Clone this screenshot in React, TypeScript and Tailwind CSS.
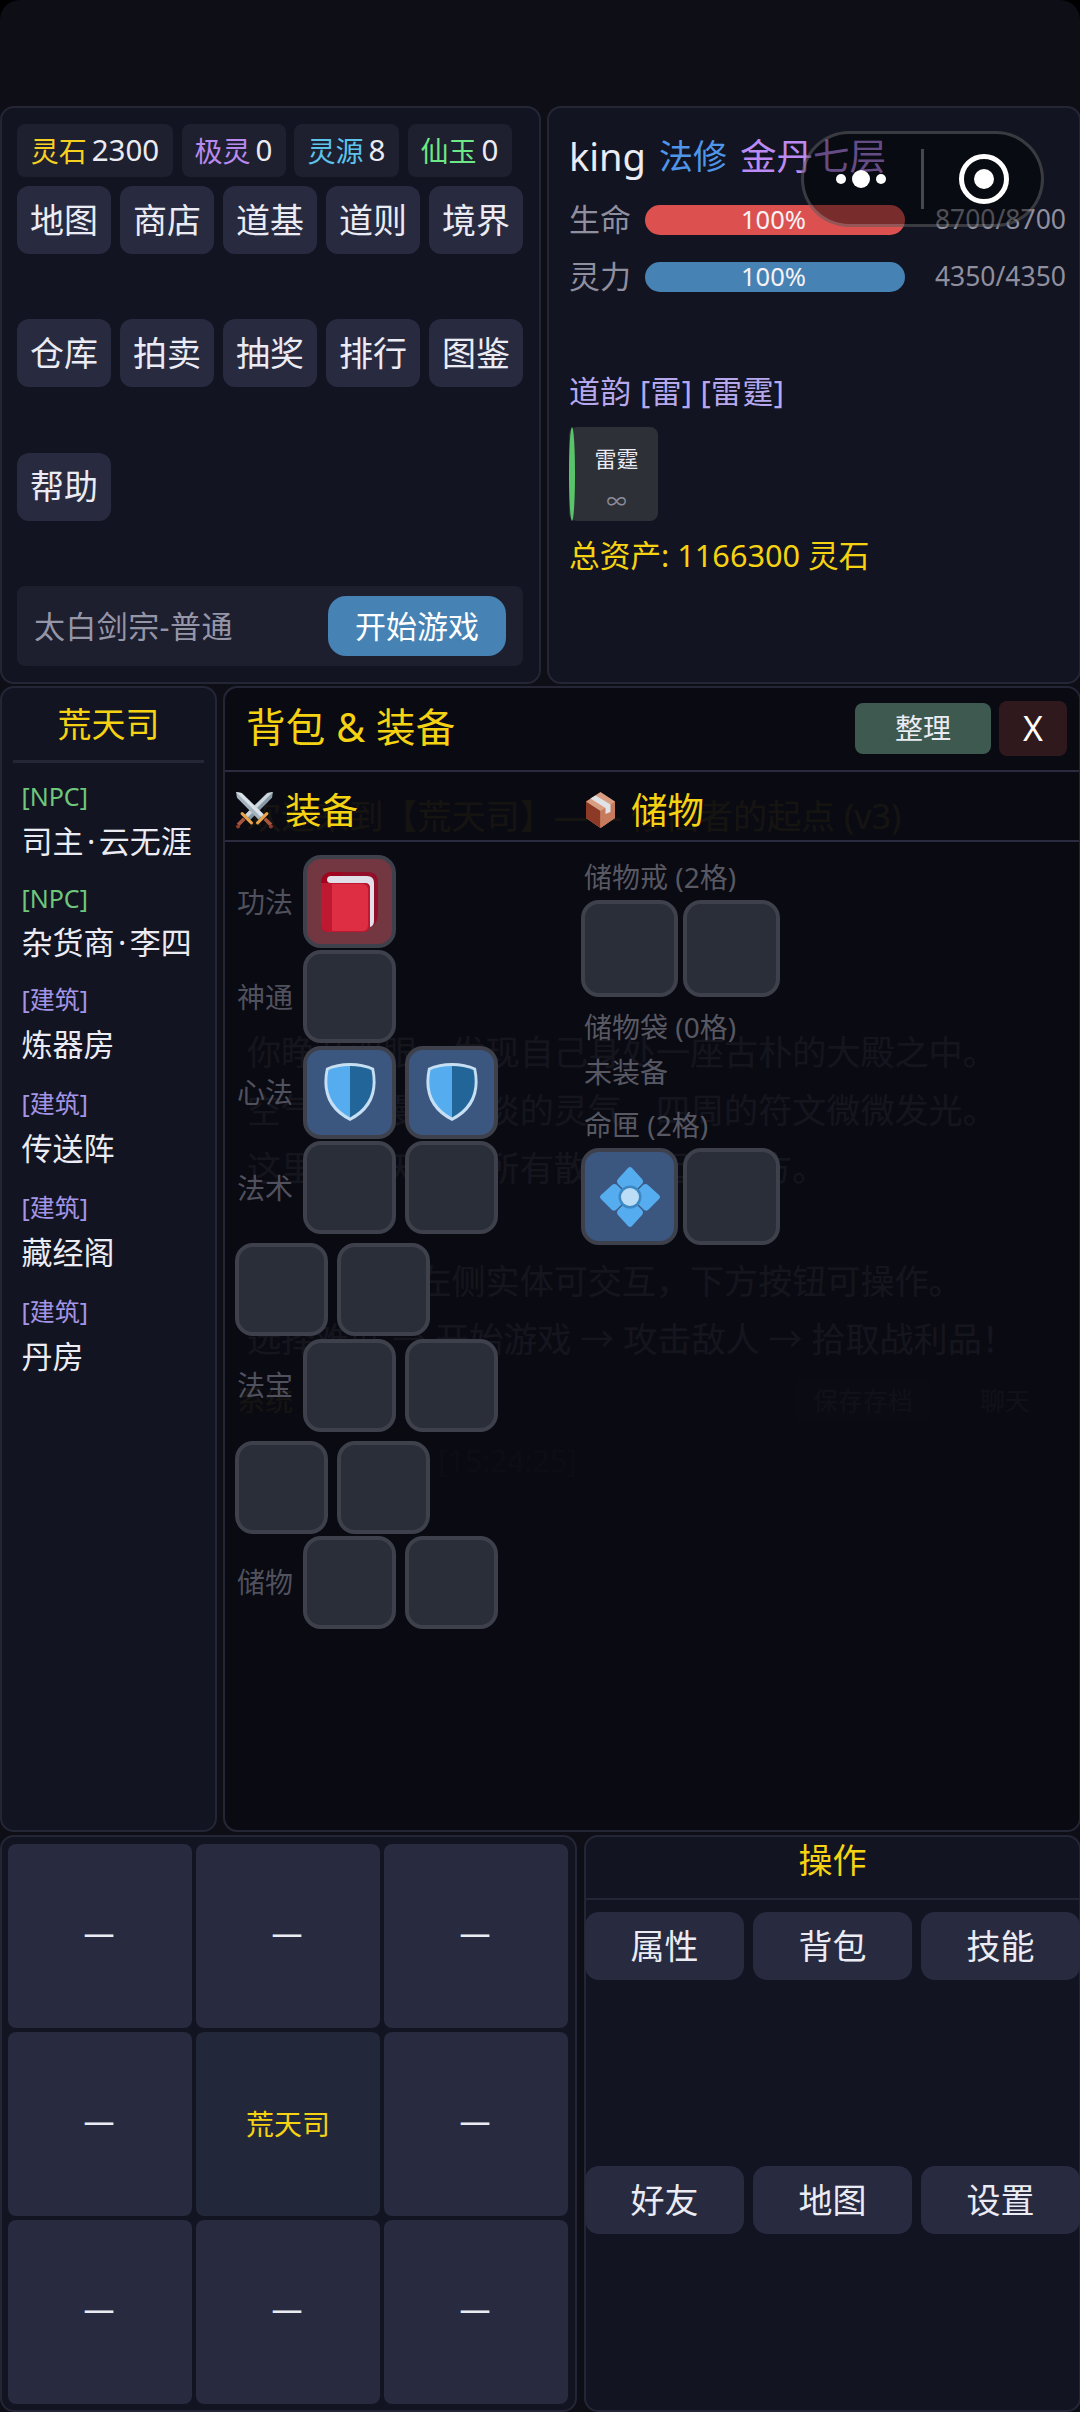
import React from "react";
import clsx from "clsx";

type IconName = "book" | "shield" | "gem";

interface SlotItem {
  icon?: IconName;
  tone?: "red" | "blue";
}

const currencies = [
  { label: "灵石", value: "2300", color: "text-[#f5d020]", width: "w-[156px]" },
  { label: "极灵", value: "0", color: "text-[#b88af0]", width: "w-[104px]" },
  { label: "灵源", value: "8", color: "text-[#5cc3ea]", width: "w-[105px]" },
  { label: "仙玉", value: "0", color: "text-[#6ee787]", width: "w-[104px]" },
];

const menuItems = [
  "地图", "商店", "道基", "道则", "境界",
  "仓库", "拍卖", "抽奖", "排行", "图鉴",
  "帮助",
];

const entities = [
  { kind: "NPC", name: "司主·云无涯" },
  { kind: "NPC", name: "杂货商·李四" },
  { kind: "建筑", name: "炼器房" },
  { kind: "建筑", name: "传送阵" },
  { kind: "建筑", name: "藏经阁" },
  { kind: "建筑", name: "丹房" },
];

const blueShield: SlotItem = { icon: "shield", tone: "blue" };

const equipment: { label: string; slots: SlotItem[] }[] = [
  { label: "功法", slots: [{ icon: "book", tone: "red" }] },
  { label: "神通", slots: [{}] },
  { label: "心法", slots: [blueShield, blueShield] },
  { label: "法术", slots: [{}, {}, {}, {}] },
  { label: "法宝", slots: [{}, {}, {}, {}] },
  { label: "储物", slots: [{}, {}] },
];

const actions = ["属性", "背包", "技能", "好友", "地图", "设置"];

const BookIcon = () => (
  <svg viewBox="0 0 57 60" className="h-[60px] w-[57px]">
    <path d="M9 0H47Q57 0 57 10V42Q57 50 51 55L48 20L4 14V8Q4 0 9 0Z" fill="#910f28" />
    <path d="M0 11Q0 2 9 0H20V60H7Q0 60 0 53Z" fill="#a0041e" />
    <path d="M10 4H46Q53 4 53 11V49Q53 54 49 55V16Q49 11 44 11H10Q6 11 6 8Q6 4 10 4Z" fill="#e1dfe8" />
    <path d="M0 11H42Q49 11 49 18V53Q49 60 42 60H7Q0 60 0 53Z" fill="#be1931" />
    <path d="M11 12H41Q47 12 47 18V53Q47 59 41 59H11Z" fill="#dd2e44" />
  </svg>
);

const ShieldIcon = () => (
  <svg viewBox="0 0 52 58" className="h-[58px] w-[52px]">
    <path d="M26 0Q39 0 50 5Q58 42 26 58Q-6 42 2 5Q13 0 26 0Z" fill="#c6dff3" />
    <path d="M26 3Q38 3 47.500 7Q54 39 26 54.500Z" fill="#226699" />
    <path d="M26 3Q14 3 4.500 7Q-2 39 26 54.500Z" fill="#55acee" />
  </svg>
);

const GemIcon = () => (
  <svg viewBox="0 0 60 60" className="h-[60px] w-[60px]">
    <g fill="#55acee">
      <path d="M28 1Q30 -1 32 1L42 12Q44 14.500 42 17L32 27H28L18 17Q16 14.500 18 12Z" />
      <path d="M28 59Q30 61 32 59L42 48Q44 45.500 42 43L32 33H28L18 43Q16 45.500 18 48Z" />
      <path d="M1 28Q-1 30 1 32L12 43Q14.500 45 17 42L27 32V28L17 18Q14.500 16 12 18Z" />
      <path d="M59 28Q61 30 59 32L48 43Q45.500 45 43 42L33 32V28L43 18Q45.500 16 48 18Z" />
    </g>
    <circle cx="30" cy="30" r="11.500" fill="#3b88c3" />
    <circle cx="30" cy="30" r="9" fill="#bbddf5" />
  </svg>
);

const SwordsIcon = () => (
  <svg viewBox="0 0 36 36" className="h-[37px] w-[37px]">
    <path d="M36 0L30.500 1L9 22L14 27L35 5.500Z" fill="#8899a6" />
    <path d="M36 0L30.500 1L9 22L11.500 24.500Z" fill="#ccd6dd" />
    <path d="M0 0L5.500 1L27 22L22 27L1 5.500Z" fill="#a4b3be" />
    <path d="M0 0L5.500 1L27 22L24.500 24.500Z" fill="#d9e2e8" />
    <path d="M8 26L2 32M28 26L34 32" stroke="#a6543c" strokeWidth="3.500" />
    <path d="M6 21L15 30M30 21L21 30" stroke="#e8a44a" strokeWidth="3" strokeLinecap="round" />
    <circle cx="2" cy="33.500" r="2" fill="#8a3b2c" />
    <circle cx="34" cy="33.500" r="2" fill="#8a3b2c" />
  </svg>
);

const BoxIcon = () => (
  <svg viewBox="0 0 29 36" className="h-[36px] w-[29px]">
    <path d="M14.500 0L29 9.500V26L14.500 36L0 26V9.500Z" fill="#d99e82" />
    <path d="M0 9.500L14.500 19V36L0 26Z" fill="#8c3a26" />
    <path d="M14.500 19L29 9.500V26L14.500 36Z" fill="#c77a5c" />
    <path d="M4.500 6.500L9.500 3.500L24.500 12.500V20L19.500 22V16Z" fill="#dfe3e8" />
  </svg>
);

const icons: Record<IconName, React.FC> = {
  book: BookIcon,
  shield: ShieldIcon,
  gem: GemIcon,
};

const Slot: React.FC<{ item: SlotItem; large?: boolean }> = ({ item, large }) => {
  const Icon = item.icon ? icons[item.icon] : null;
  return (
    <div
      className={clsx(
        "flex shrink-0 items-center justify-center rounded-[18px] border-4 border-[#3e414b]",
        large ? "size-[97px]" : "size-[93px]",
        item.tone === "red" && "bg-[#733742]",
        item.tone === "blue" && "bg-[#3b567f]",
        !item.tone && "bg-[#2a2e38]",
      )}
    >
      {Icon && <Icon />}
    </div>
  );
};

const Panel: React.FC<{ className?: string; children: React.ReactNode }> = ({
  className,
  children,
}) => (
  <section className={clsx("shrink-0 rounded-[14px] border-2 border-[#242636] bg-[#121421]", className)}>
    {children}
  </section>
);

const StatBar: React.FC<{ label: string; value: string; color: string }> = ({
  label,
  value,
  color,
}) => (
  <div className="flex h-[57px] items-center">
    <span className="w-[76px] text-[31px] text-[#8f8f9f]">{label}</span>
    <div
      className={clsx(
        "flex h-[30px] w-[260px] items-center justify-center rounded-full pr-[3px] text-[25.5px] text-[#f6f2f4]",
        color,
      )}
    >
      100%
    </div>
    <span className="w-[161px] pt-[1px] text-right text-[26.5px] text-[#8f8f9f]">{value}</span>
  </div>
);

// Native mini-program capsule floating over the header
const Capsule = () => (
  <div className="absolute left-[801px] top-[131px] h-[96px] w-[243px] rounded-full border-[3px] border-white/20 bg-black/45">
    <svg viewBox="0 0 237 90" className="h-[90px] w-[237px]">
      <circle cx="37" cy="45" r="5" fill="#fff" />
      <circle cx="57" cy="45" r="9" fill="#fff" />
      <circle cx="77" cy="45" r="5" fill="#fff" />
      <path d="M118.500 15V75" stroke="#fff" strokeOpacity="0.25" strokeWidth="3" />
      <circle cx="180" cy="45" r="22.500" fill="none" stroke="#fff" strokeWidth="5" />
      <circle cx="180" cy="45" r="10" fill="#fff" />
    </svg>
  </div>
);

const MenuPanel = () => (
  <Panel className="h-[578px] w-[541px] pl-[15px] pr-[16px] pt-[16px]">
    <div className="flex gap-[8.5px]">
      {currencies.map((c) => (
        <div
          key={c.label}
          className={clsx("flex h-[53px] items-center justify-center gap-[5px] rounded-lg bg-[#1e1f2f] text-[28px]", c.width)}
        >
          <span className={c.color}>{c.label}</span>
          <span className="text-[29.5px]">{c.value}</span>
        </div>
      ))}
    </div>
    <div className="mt-[9px] grid h-[400px] grid-cols-5 grid-rows-3 gap-x-[9px]">
      {menuItems.map((item) => (
        <button key={item} className="h-[68px] rounded-xl bg-[#282a40] text-[34px]">
          {item}
        </button>
      ))}
    </div>
    <div className="flex h-[80px] items-center justify-between rounded-lg bg-[#1d1e2e] pl-[17px] pr-[17px]">
      <span className="text-[31px] tracking-[0.4px] text-[#9595a8]">太白剑宗-普通</span>
      <button className="h-[60px] w-[178px] rounded-[18px] bg-[#4682b4] text-[31px] text-white">
        开始游戏
      </button>
    </div>
  </Panel>
);

const StatusPanel = () => (
  <Panel className="h-[578px] w-[534px] pl-[20px]">
    <div className="mt-[20px] flex h-[63px] items-center whitespace-pre">
      <span className="w-[90px] pb-[6px] text-[38px]">king</span>
      <span className="w-[81px] pb-[6px] text-[34px] text-[#4f96ea]">法修</span>
      <span className="pb-[6px] text-[36.5px] text-[#bb8af2]">金丹七层</span>
    </div>
    <StatBar label="生命" value="8700/8700" color="bg-[#dc5150]" />
    <StatBar label="灵力" value="4350/4350" color="bg-[#4682b4]" />
    <div className="mt-[63px] flex h-[46px] items-center text-[31px] tracking-[0.3px] text-[#b7a8ee]">
      道韵 [雷] [雷霆]
    </div>
    <div className="mt-[13px] flex h-[94px] w-[89px] rounded-lg bg-[#2e3038]">
      <div className="h-full w-[6px] rounded-[50%] bg-[#5ac46b]" />
      <div className="flex flex-1 flex-col items-center pt-[15px]">
        <span className="text-[22px] leading-[32px]">雷霆</span>
        <span className="mt-[14px] text-[20px] leading-[28px] text-[#8c8c99]">∞</span>
      </div>
    </div>
    <div className="mt-[11px] flex h-[46px] items-center text-[30.7px] text-[#f5d312]">
      总资产: 1166300 灵石
    </div>
  </Panel>
);

const EntityName: React.FC<{ name: string }> = ({ name }) => {
  const [title, person] = name.split("·");
  return (
    <div className="flex h-[46px] items-center text-[31px]">
      {title}
      {person && (
        <>
          <span className="mx-[3.5px]">·</span>
          {person}
        </>
      )}
    </div>
  );
};

const EntityPanel = () => (
  <Panel className="h-[1146px] w-[217px] px-[11px]">
    <h2 className="flex h-[75px] items-center justify-center border-b-[3px] border-[#242636] text-[34px] text-[#f5d312]">
      荒天司
    </h2>
    <ul className="mt-[13px] pl-[8.5px]">
      {entities.map(({ kind, name }) => (
        <li key={name} className={clsx("whitespace-nowrap", kind === "NPC" ? "h-[101.5px]" : "h-[104px]")}>
          <div
            className={clsx(
              "flex h-[42px] items-center text-[25px]",
              kind === "NPC" ? "text-[#6fc77c]" : "text-[#a394e6]",
            )}
          >
            [{kind}]
          </div>
          <EntityName name={name} />
        </li>
      ))}
    </ul>
  </Panel>
);

const StoryLog = () => (
  <div className="whitespace-pre pt-[99px] text-[34.1px] leading-[58px]">
    <div className="pl-[22px]">
      <p className="text-[#ffd700]">欢迎来到【荒天司】—— 修仙者的起点 (v3)</p>
      <p className="mt-[178px]">你睁开双眼，发现自己身处一座古朴的大殿之中。</p>
      <p>空气中弥漫着淡淡的灵气，四周的符文微微发光。</p>
      <p>这里是荒天司，所有散修的起始地方。</p>
      <p className="mt-[55px]">提示：点击左侧实体可交互，下方按钮可操作。</p>
      <p>选择难度 → 开始游戏 → 攻击敌人 → 拾取战利品！</p>
    </div>
    <div className="flex h-[64px] items-center bg-[#1e1f2f] pl-[12px] text-[25px]">
      <span className="w-[558px] shrink-0 text-[28px] text-[#ffd700]">系统</span>
      <span className="flex h-[42px] w-[136px] shrink-0 items-center justify-center rounded-lg bg-[#2e3048] text-[#9595a8]">
        保存存档
      </span>
      <span className="flex-1 text-center text-[#9595a8]">聊天</span>
    </div>
    <p className="pl-[213px] text-[30px] text-[#4f505e]">[15:24:25]</p>
  </div>
);

const storageLabel = "flex items-center pb-[2px] pl-[3px] text-[28px] text-[#585863]";

const BagOverlay = () => (
  <div className="absolute inset-0 flex flex-col rounded-l-[14px] bg-[#090912]/95">
    <header className="flex h-[84px] shrink-0 items-center border-b-2 border-[#2a2b3e] pb-[2px] pl-[21px]">
      <h1 className="flex-1 text-[39.5px] tracking-[0.3px] text-[#f5d312]">背包 & 装备</h1>
      <button className="h-[51px] w-[136px] rounded-lg bg-[#3e5a50] text-[28px]">整理</button>
      <button className="ml-[8px] mr-[12px] h-[55px] w-[68px] rounded-lg bg-[#30191d] text-[34px] text-white">
        X
      </button>
    </header>
    <div className="flex h-[70px] shrink-0 items-center border-b-2 border-[#2a2b3e] pt-[8px] text-[36.5px] text-[#f5d312]">
      <h2 className="flex w-[350px] items-center gap-[12px] pl-[11px]">
        <SwordsIcon />
        装备
      </h2>
      <h2 className="flex items-center gap-[16px] pl-[11px]">
        <BoxIcon />
        储物
      </h2>
    </div>
    <div className="flex pl-[10px] pt-[13px]">
      <div className="w-[346px]">
        {equipment.map(({ label, slots }) => (
          <div key={label} className="mb-[2.4px] flex w-[280px] flex-wrap gap-y-[9px]">
            <div className="flex w-[68px] items-center pl-[2px] text-[28px] text-[#51515e]">{label}</div>
            {slots.map((item, i) => (
              <div key={i} className="mr-[9px]">
                <Slot item={item} />
              </div>
            ))}
          </div>
        ))}
      </div>
      <div>
        <div className={clsx(storageLabel, "h-[45px]")}>储物戒 (2格)</div>
        <div className="flex gap-[5px]">
          <Slot item={{}} large />
          <Slot item={{}} large />
        </div>
        <div className={clsx(storageLabel, "mt-[8px] h-[45px]")}>储物袋 (0格)</div>
        <div className={clsx(storageLabel, "h-[45px]")}>未装备</div>
        <div className={clsx(storageLabel, "mt-[8px] h-[45px]")}>命匣 (2格)</div>
        <div className="flex gap-[5px]">
          <Slot item={{ icon: "gem", tone: "blue" }} large />
          <Slot item={{}} large />
        </div>
      </div>
    </div>
  </div>
);

const MapPanel = () => (
  <Panel className="grid h-[577px] w-[577px] grid-cols-3 grid-rows-3 gap-1 p-[6px] pr-[7px] pt-[7px]">
    {Array.from({ length: 9 }, (_, i) => (
      <button
        key={i}
        className={clsx(
          "rounded-lg",
          i === 4 ? "bg-[#23273a] text-[28px] text-[#f5d312]" : "bg-[#282a40] pb-[7px] pr-[2px] text-[31px]",
        )}
      >
        {i === 4 ? "荒天司" : "—"}
      </button>
    ))}
  </Panel>
);

const ActionPanel = () => (
  <Panel className="h-[577px] w-[497px]">
    <h2 className="flex h-[63px] items-center justify-center border-b-2 border-[#242636] pb-[14px] text-[34px] text-[#f5d312]">
      操作
    </h2>
    <div className="-mx-[1px] mt-[12px] grid h-[508px] grid-cols-3 grid-rows-2 gap-x-[9px]">
      {actions.map((action) => (
        <button key={action} className="h-[68px] rounded-[14px] bg-[#282a40] text-[34px]">
          {action}
        </button>
      ))}
    </div>
  </Panel>
);

export default function App() {
  return (
    <div className="bg-black">
      <main className="relative flex h-[2412px] w-[1080px] flex-col overflow-hidden rounded-t-[20px] bg-[#0d0e16] pt-[106px] font-['Noto_Sans','Noto_Sans_CJK_SC',sans-serif] text-[#ebebf3]">
        <div className="flex gap-[6px]">
          <MenuPanel />
          <StatusPanel />
        </div>
        <div className="mt-[2px] flex gap-[6px]">
          <EntityPanel />
          <Panel className="relative h-[1146px] w-[858px] overflow-hidden">
            <StoryLog />
            <BagOverlay />
          </Panel>
        </div>
        <div className="mt-[3px] flex gap-[7px]">
          <MapPanel />
          <ActionPanel />
        </div>
        <Capsule />
      </main>
    </div>
  );
}
